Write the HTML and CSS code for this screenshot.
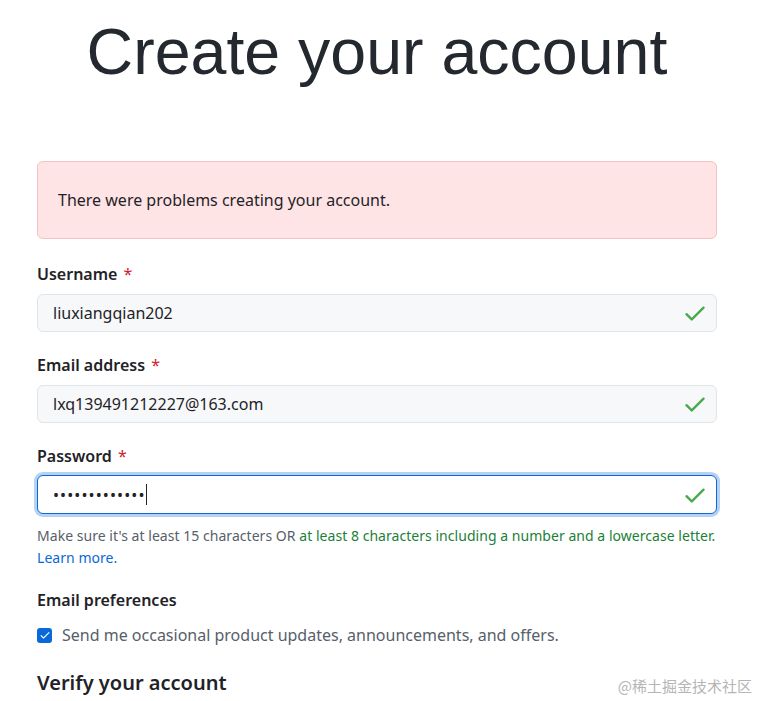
FILE: index.html
```html
<!DOCTYPE html>
<html lang="en">
<head>
<meta charset="utf-8">
<title>Create your account</title>
<link rel="stylesheet" href="styles.css">
</head>
<body>
<main class="page">
  <h1 class="title">Create your account</h1>
  <div class="form">
    <div class="flash">There were problems creating your account.</div>

    <div class="field">
      <label class="label">Username <span class="req">*</span></label>
      <div class="input">
        <span class="value">liuxiangqian202</span>
        <svg class="check" viewBox="0 0 16 16" width="26" height="26"><path d="M13.78 4.22a.75.75 0 0 1 0 1.06l-7.25 7.25a.75.75 0 0 1-1.06 0L2.22 9.28a.751.751 0 0 1 .018-1.042.751.751 0 0 1 1.042-.018L6 10.94l6.72-6.72a.75.75 0 0 1 1.06 0Z"/></svg>
      </div>
    </div>

    <div class="field">
      <label class="label">Email address <span class="req">*</span></label>
      <div class="input">
        <span class="value">lxq139491212227@163.com</span>
        <svg class="check" viewBox="0 0 16 16" width="26" height="26"><path d="M13.78 4.22a.75.75 0 0 1 0 1.06l-7.25 7.25a.75.75 0 0 1-1.06 0L2.22 9.28a.751.751 0 0 1 .018-1.042.751.751 0 0 1 1.042-.018L6 10.94l6.72-6.72a.75.75 0 0 1 1.06 0Z"/></svg>
      </div>
    </div>

    <div class="field">
      <label class="label">Password <span class="req">*</span></label>
      <div class="input focus">
        <span class="value dots">•••••••••••••</span><span class="caret"></span>
        <svg class="check" viewBox="0 0 16 16" width="26" height="26"><path d="M13.78 4.22a.75.75 0 0 1 0 1.06l-7.25 7.25a.75.75 0 0 1-1.06 0L2.22 9.28a.751.751 0 0 1 .018-1.042.751.751 0 0 1 1.042-.018L6 10.94l6.72-6.72a.75.75 0 0 1 1.06 0Z"/></svg>
      </div>
      <p class="hint">Make sure it's at least 15 characters OR <span class="ok">at least 8 characters including a number and a lowercase letter.</span><br><a class="link" href="#">Learn more.</a></p>
    </div>

    <div class="prefs">
      <div class="label">Email preferences</div>
      <label class="checkrow"><span class="box"><svg viewBox="0 0 16 16" width="12" height="12"><path d="M13.78 4.22a.75.75 0 0 1 0 1.06l-7.25 7.25a.75.75 0 0 1-1.06 0L2.22 9.28a.751.751 0 0 1 .018-1.042.751.751 0 0 1 1.042-.018L6 10.94l6.72-6.72a.75.75 0 0 1 1.06 0Z"/></svg></span>Send me occasional product updates, announcements, and offers.</label>
    </div>

    <h2 class="verify">Verify your account</h2>
  </div>
  <div class="watermark">@稀土掘金技术社区</div>
</main>
</body>
</html>
```

FILE: styles.css
```css
* { box-sizing: border-box; }
html, body { margin: 0; padding: 0; background: #ffffff; }
body {
  font-family: "Noto Sans", "Noto Sans CJK SC", sans-serif;
  color: #1f2328;
  width: 759px;
  height: 701px;
  overflow: hidden;
}
.page { position: relative; height: 701px; padding: 0 42px 0 37px; }
.title {
  margin: 0;
  height: 161px;
  padding-top: 16px;
  font-family: "Liberation Sans", Arial, sans-serif;
  font-weight: 400;
  font-size: 64.5px;
  line-height: 72px;
  text-align: center;
  color: #24292f;
}
.form { width: 680px; display: flex; flex-direction: column; }
.flash {
  height: 78px;
  display: flex;
  align-items: center;
  padding: 0 20px;
  background: #ffe4e6;
  border: 1px solid #f2c2c6;
  border-radius: 6px;
  font-size: 16px;
  color: #1f2328;
}
.field { margin-top: 21px; display: flex; flex-direction: column; }
.flash + .field { margin-top: 23px; }
.label {
  font-size: 16px;
  font-weight: 600;
  line-height: 24px;
  color: #1f2328;
}
.req { color: #cf222e; margin-left: 2px; font-weight: 400; }
.input {
  margin-top: 8px;
  height: 38px;
  display: flex;
  align-items: center;
  padding: 0 8px 0 15px;
  background: #f6f8fa;
  border: 1px solid #e1e4e8;
  border-radius: 6px;
  font-size: 16px;
}
.input .value { flex: 0 0 auto; color: #1f2328; }
.input .check { margin-left: auto; fill: #4aa94d; }
.input.focus {
  margin-top: 7px;
  height: 39px;
  background: #ffffff;
  border: 1.5px solid #0969da;
  box-shadow: 0 0 0 3px rgba(9, 105, 218, 0.3);
}
.dots { font-size: 16px; letter-spacing: 1.1px; }
.caret { display: inline-block; width: 1px; height: 21px; background: #1f2328; margin-left: 0; }
.hint {
  margin: 11px 0 0;
  font-size: 14px;
  line-height: 22px;
  color: #57606a;
  letter-spacing: 0.04px;
}
.ok { color: #1a7f37; }
.link { color: #0969da; text-decoration: none; }
.prefs { margin-top: 19px; display: flex; flex-direction: column; gap: 11px; }
.checkrow {
  display: flex;
  align-items: center;
  font-size: 16px;
  line-height: 24px;
  color: #57606a;
}
.box {
  width: 15px;
  height: 15px;
  border-radius: 3px;
  background: #0969da;
  margin-right: 10px;
  display: flex;
  align-items: center;
  justify-content: center;
}
.box svg { fill: #ffffff; }
.verify {
  margin: 21px 0 0;
  font-size: 20px;
  font-weight: 600;
  line-height: 30px;
  color: #1f2328;
}
.watermark {
  position: absolute;
  right: 7px;
  bottom: 5px;
  font-size: 15px;
  color: #b5b5b5;
  font-family: "Noto Sans CJK SC", sans-serif;
}
```
